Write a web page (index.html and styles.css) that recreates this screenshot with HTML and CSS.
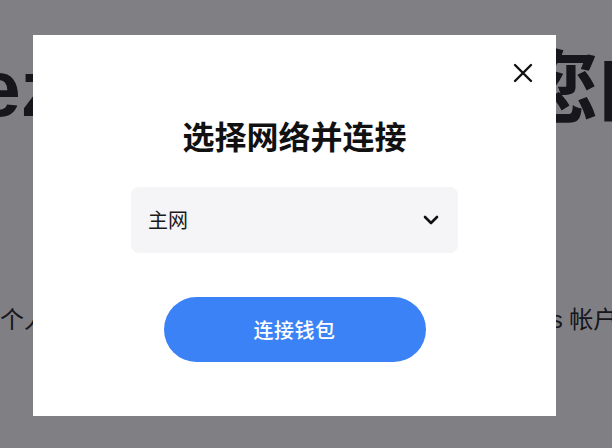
FILE: index.html
```html
<!DOCTYPE html>
<html lang="zh-CN">
<head>
<meta charset="utf-8">
<title>连接钱包</title>
<link rel="stylesheet" href="styles.css">
</head>
<body>
<main class="hero">
  <h1 class="hero-title">Tezos, 欢迎使用您的</h1>
  <p class="hero-text">个人钱包让您可以安全, 便捷地访问和管理您的 Tezos 帐户</p>
</main>

<div class="overlay">
  <div class="modal" role="dialog" aria-labelledby="modal-title">
    <button class="close-btn" aria-label="关闭">
      <svg width="20" height="20" viewBox="0 0 20 20"><path d="M2 2 L18 18 M18 2 L2 18" stroke="#111" stroke-width="2.4" stroke-linecap="round" fill="none"/></svg>
    </button>
    <h2 class="modal-title" id="modal-title">选择网络并连接</h2>
    <div class="select">
      <span class="select-value">主网</span>
      <svg class="chevron" width="16" height="10" viewBox="0 0 16 10"><path d="M2 2 L8 8 L14 2" stroke="#111" stroke-width="2.6" stroke-linecap="round" stroke-linejoin="round" fill="none"/></svg>
    </div>
    <button class="connect-btn">连接钱包</button>
  </div>
</div>
</body>
</html>
```

FILE: styles.css
```css
* { box-sizing: border-box; }

html, body {
  margin: 0;
  padding: 0;
  height: 100%;
}

body {
  background: #ffffff;
  color: #222;
  font-family: "Liberation Sans", "Noto Sans CJK SC", sans-serif;
  overflow: hidden;
}

.hero {
  display: flex;
  flex-direction: column;
  align-items: center;
  padding-top: 41px;
}

.hero-title {
  margin: 0;
  font-size: 80px;
  line-height: 96px;
  font-weight: 700;
  white-space: nowrap;
  color: #2a2a2e;
}

.hero-text {
  margin: 167px 0 0;
  align-self: flex-start;
  font-size: 24px;
  line-height: 32px;
  white-space: nowrap;
  color: #2a2a2e;
}

.overlay {
  position: fixed;
  inset: 0;
  background: rgba(1, 2, 10, 0.5);
  display: flex;
  align-items: flex-start;
  padding: 35px 0 0 33px;
}

.modal {
  position: relative;
  width: 523px;
  height: 381px;
  background: #ffffff;
  display: flex;
  flex-direction: column;
  align-items: center;
  padding: 80px 0 54px;
  font-family: "Noto Sans CJK SC", sans-serif;
}

.close-btn {
  position: absolute;
  top: 28px;
  right: 23px;
  width: 20px;
  height: 20px;
  padding: 0;
  border: 0;
  background: none;
  display: flex;
}

.modal-title {
  margin: 0;
  font-size: 32px;
  line-height: 40px;
  font-weight: 700;
  color: #111;
}

.select {
  margin-top: 32px;
  width: 327px;
  height: 66px;
  border-radius: 8px;
  background: #f5f5f7;
  display: flex;
  align-items: center;
  justify-content: space-between;
  padding: 0 19px 0 17px;
}

.select-value {
  font-size: 20px;
  line-height: 28px;
  color: #1a1a1a;
}

.chevron { display: block; }

.connect-btn {
  margin-top: 44px;
  width: 262px;
  height: 65px;
  border: 0;
  border-radius: 33px;
  background: #3b82f6;
  color: #ffffff;
  font-family: "Noto Sans CJK SC", sans-serif;
  font-size: 20px;
  font-weight: 500;
  letter-spacing: 0.5px;
}
```
